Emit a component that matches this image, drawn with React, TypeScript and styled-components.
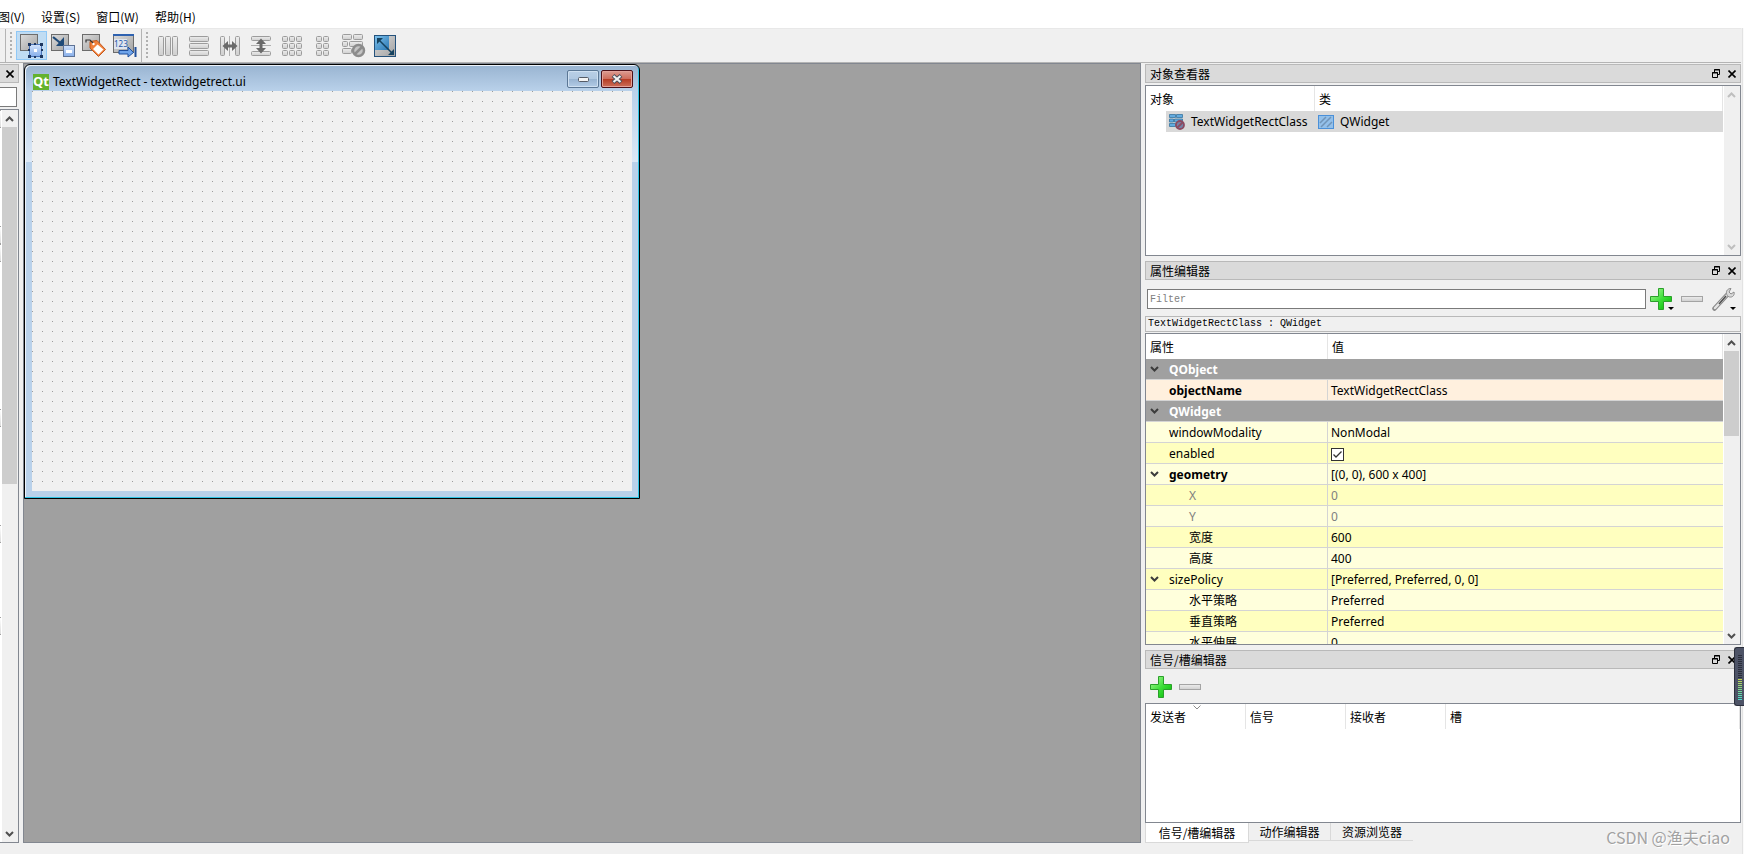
import React from 'react';
import styled, { createGlobalStyle, css } from 'styled-components';

const ui = `"Noto Sans", "Noto Sans CJK SC", sans-serif`;
const cjk = `"Noto Sans CJK SC", sans-serif`;

const GlobalStyle = createGlobalStyle`
  * { box-sizing: border-box; }
  body { margin: 0; font: 12px/18px ${ui}; color: #000; background: #f0f0f0; overflow: hidden; }
  button, input { font: inherit; color: inherit; margin: 0; padding: 0; border-radius: 0; }
  button { background: none; border: 0; display: flex; align-items: center; justify-content: center; }
  table { border-collapse: separate; border-spacing: 0; table-layout: fixed; width: 100%; }
  th, td { padding: 0; font-weight: normal; text-align: left; white-space: nowrap; }
  svg { display: block; flex: none; }
`;

const Page = styled.div`
  position: relative;
  display: flex;
  flex-direction: column;
  height: 100vh;
  background: #fafafa;
`;

const MenuBar = styled.nav`
  display: flex;
  align-items: center;
  height: 28px;
  padding-top: 6px;
  background: #fff;
  overflow: hidden;
`;

const MenuItem = styled.button<{ $cut?: boolean }>`
  padding: 0 8px;
  font-family: ${cjk};
  white-space: nowrap;
  ${p => p.$cut && css`width: 33px; justify-content: flex-end;`}
`;

const Body = styled.div`
  flex: 1;
  min-height: 0;
  display: flex;
  flex-direction: column;
  margin-right: 1px;
  padding-right: 1px;
  border-right: 1px solid #e3e3e3;
  background: #f0f0f0;
`;

const ToolBars = styled.div`
  display: flex;
  flex: none;
  height: 35px;
  border-top: 1px solid #e8e8e8;
  border-bottom: 1px solid #b4b4b4;
  padding-left: 5px;
`;

const ToolGroup = styled.div`
  display: flex;
  align-items: center;
  border-left: 1px solid #b4b4b4;
  padding: 0 1px 0 4px;
`;

const Grip = styled.span`
  width: 2px;
  height: 27px;
  margin-right: 4px;
  background: linear-gradient(#b0b0b0 2px, transparent 2px) 0 0 / 2px 4px;
`;

const ToolButton = styled.button<{ $active?: boolean }>`
  width: 31px;
  height: 29px;
  border: 1px solid ${p => (p.$active ? '#90c8f6' : 'transparent')};
  background: ${p => (p.$active ? '#c0dcf3' : 'transparent')};
`;

const Workspace = styled.div`
  flex: 1;
  min-height: 0;
  display: flex;
  gap: 4px;
  padding-bottom: 11px;
`;

const LeftDock = styled.aside`
  flex: 0 0 19px;
  display: flex;
  flex-direction: column;
  padding-top: 1px;
`;

const LeftTitle = styled.div`
  display: flex;
  justify-content: flex-end;
  align-items: center;
  height: 19px;
  padding-right: 4px;
  border: 1px solid #b9b9b9;
  border-left: 0;
  background: #dadada;
`;

const LeftFilter = styled.input`
  width: 17px;
  height: 20px;
  margin: 4px 0 2px;
  border: 1px solid #7a7a7a;
  border-left: 0;
  background: #fff;
`;

const LeftList = styled.div`
  flex: 1;
  min-height: 0;
  display: flex;
  border: 1px solid #828790;
  border-left: 0;
  background: #fff;
`;

const CategoryEdges = styled.div`
  width: 2px;
  padding-right: 1px;
`;

const CategoryEdge = styled.div<{ $gap: number }>`
  height: 18px;
  margin-top: ${p => p.$gap}px;
  border: solid #a0a0a0;
  border-width: 1px 0;
  background: linear-gradient(#fff, #dcdcdc);
`;

const Bar = styled.div<{ $w: number }>`
  flex: 0 0 ${p => p.$w}px;
  display: flex;
  flex-direction: column;
  background: #f0f0f0;
`;

const BarArrow = styled.button`
  flex: none;
  height: 17px;
  padding-right: 1px;
`;

const Thumb = styled.div<{ $h: number }>`
  height: ${p => p.$h}px;
  margin-right: 1px;
  background: #cdcdcd;
`;

const Spacer = styled.div`
  flex: 1;
`;

const Canvas = styled.main`
  flex: 1;
  min-width: 0;
  border: 1px solid #828790;
  background: #a0a0a0;
  overflow: hidden;
`;

const FormWindow = styled.section`
  width: 616px;
  padding: 0 7px 7px;
  border: 1px solid #000;
  border-radius: 6px 6px 0 0;
  box-shadow: inset -1px -1px #2fc4e4, inset 1px 1px #eef4fb;
  background:
    linear-gradient(#99b4d1, #b9d1ea) 0 0 / 100% 26px no-repeat,
    linear-gradient(#b9d1ea, #dce8f6) 0 26px / 100% 71px no-repeat,
    #b9d1ea;
`;

const FormTitle = styled.header`
  display: flex;
  align-items: flex-end;
  height: 26px;
  padding: 0 0 1px 1px;
  line-height: 16px;
`;

const QtLogo = styled.span`
  width: 16px;
  height: 16px;
  margin-right: 4px;
  background: #64b22e;
  color: #fff;
  font: bold 13px/15px "Open Sans", sans-serif;
  text-align: center;
`;

const WindowButtons = styled.div`
  display: flex;
  gap: 2px;
  margin: 0 -1px 2px auto;
`;

const WindowButton = styled.button<{ $close?: boolean }>`
  width: 32px;
  height: 18px;
  border: 1px solid ${p => (p.$close ? '#4c1018' : '#5b7795')};
  border-radius: 2px;
  box-shadow: inset 0 0 0 1px ${p => (p.$close ? '#e3a199' : '#cfe0f1')};
  background: ${p =>
    p.$close
      ? 'linear-gradient(#dc9c92, #cf6d5c 48%, #b53a22 50%, #cc6f5a)'
      : 'linear-gradient(#b9cfe6, #b0c8e1 48%, #97b3d1 50%, #b3cce6)'};
`;

const DotGrid = styled.div`
  height: 400px;
  background:
    linear-gradient(transparent 1px, #f0f0f0 1px) 0 0 / 10px 10px,
    linear-gradient(90deg, #9c9c9c 1px, #f0f0f0 1px) 0 0 / 10px 10px;
`;

const RightDock = styled.aside`
  flex: 0 0 596px;
  min-width: 0;
  display: flex;
  flex-direction: column;
  padding-top: 1px;
`;

const DockTitle = styled.header`
  flex: none;
  display: flex;
  align-items: center;
  gap: 8px;
  height: 19px;
  padding: 0 4px;
  border: 1px solid #b9b9b9;
  background: #dadada;
  font-family: ${cjk};
`;

const DockName = styled.span`
  flex: 1;
`;

const Frame = styled.div<{ $h?: number }>`
  ${p => (p.$h ? css`flex: none; height: ${p.$h}px;` : css`flex: 1; min-height: 0;`)}
  display: flex;
  align-items: stretch;
  border: 1px solid #828790;
  background: #fff;
`;

const ObjectFrame = styled(Frame)`
  margin: 2px 0 5px;
`;

const Clip = styled.div<{ $full?: boolean }>`
  flex: 1;
  min-width: 0;
  overflow: hidden;
  border-right: ${p => (p.$full ? 0 : 1)}px solid #fff;
`;

const HeadCell = styled.th<{ $w?: number }>`
  height: 25px;
  padding-left: 4px;
  ${p => p.$w && css`width: ${p.$w}px;`}
  border-right: 1px solid #e5e5e5;
  font-family: ${cjk};
`;

const TreeCell = styled.td`
  height: 21px;
`;

const TreeItem = styled.div<{ $indent?: boolean }>`
  display: flex;
  align-items: center;
  gap: 6px;
  height: 21px;
  margin-left: ${p => (p.$indent ? 20 : 0)}px;
  padding-left: 3px;
  background: #d9d9d9;
`;

const FilterRow = styled.div`
  flex: none;
  display: flex;
  align-items: center;
  height: 36px;
  padding: 2px 3px 0 2px;
`;

const FilterInput = styled.input`
  flex: 1;
  min-width: 0;
  height: 20px;
  margin-right: 4px;
  padding-left: 2px;
  border: 1px solid #7a7a7a;
  background: #fff;
  font: 10px/18px "Liberation Mono", monospace;
  &::placeholder { color: #808080; opacity: 1; }
`;

const IconButton = styled.button<{ $w: number }>`
  width: ${p => p.$w}px;
  height: 24px;
`;

const ClassLabel = styled.div`
  flex: none;
  height: 16px;
  margin-bottom: 1px;
  padding-left: 2px;
  border: 1px solid #b9b9b9;
  font: 10px/14px "Liberation Mono", monospace;
`;

type Tone = 'group' | 'peach' | 'light' | 'dark';
const toneColor: Record<Tone, string> = {
  group: '#a0a0a0',
  peach: '#fff0de',
  light: '#ffffdc',
  dark: '#ffffbf',
};

const PropRow = styled.tr<{ $tone: Tone; $muted?: boolean }>`
  background: ${p => toneColor[p.$tone]};
  color: ${p => (p.$tone === 'group' ? '#fff' : p.$muted ? '#808080' : '#000')};
`;

const PropCell = styled.td<{ $bold?: boolean; $name?: boolean }>`
  height: 21px;
  padding: 2px 0 0 3px;
  border-bottom: 1px solid #d4d4d4;
  ${p => p.$name && css`border-right: 1px solid #d4d4d4;`}
  ${p => p.$bold && css`font-weight: bold;`}
`;

const PropLabel = styled.div<{ $depth: number }>`
  display: flex;
  align-items: center;
  height: 18px;
  padding-left: ${p => (p.$depth === 2 ? 20 : 0)}px;
`;

const Expander = styled.span`
  width: 20px;
  padding: 0 0 2px 1px;
`;

const CheckLabel = styled.label`
  display: flex;
  align-items: center;
  height: 18px;
`;

const CheckBox = styled.input`
  appearance: none;
  width: 13px;
  height: 13px;
  border: 1px solid #333;
  background: #fff;
  & + svg { visibility: hidden; }
  &:checked + svg { visibility: visible; }
`;

const CheckWrap = styled.span`
  display: grid;
  & > * { grid-area: 1 / 1; }
  & > svg { pointer-events: none; }
`;

const SignalTitle = styled(DockTitle)`
  margin-top: 5px;
`;

const SignalTools = styled.div`
  flex: none;
  display: flex;
  align-items: center;
  gap: 5px;
  height: 34px;
  padding: 2px 0 0 5px;
`;

const SortInner = styled.div`
  position: relative;
`;

const SortMark = styled.span`
  position: absolute;
  left: 43px;
  top: -3px;
`;

const Tabs = styled.div`
  flex: none;
  display: flex;
  align-items: flex-start;
  height: 20px;
`;

const Tab = styled.button<{ $active?: boolean }>`
  height: ${p => (p.$active ? 20 : 18)}px;
  width: ${p => (p.$active ? 104 : 82)}px;
  border: 1px solid #d9d9d9;
  border-top: 0;
  border-left-width: ${p => (p.$active ? 1 : 0)}px;
  background: ${p => (p.$active ? '#fff' : '#f0f0f0')};
  font-family: ${cjk};
  white-space: nowrap;
  &:last-child { border-right: 0; }
`;

const Monitor = styled.div`
  position: absolute;
  right: 0;
  top: 647px;
  width: 10px;
  height: 59px;
  padding: 7px 2px 6px 3px;
  border: 1px solid #2b2f3c;
  border-right: 0;
  border-radius: 3px 0 0 3px;
  background: #4d5366;
`;

const MonitorTrack = styled.div`
  width: 4px;
  height: 45px;
  background:
    repeating-linear-gradient(transparent 0 1px, #4d5366 1px 2px),
    linear-gradient(#2b2f3c 24px, #c6d84e 24px, #7fd98a 34px, #45e0d0);
`;

const Watermark = styled.div`
  position: absolute;
  right: 14px;
  bottom: 6px;
  color: #a2a2a2;
  font: 16px/22px "Noto Sans CJK SC", sans-serif;
  text-shadow: 1px 1px #fff;
`;

/* ---------- icons ---------- */

const Chevron = ({ up, color = '#505050' }: { up?: boolean; color?: string }) => (
  <svg width="9" height="6" viewBox="0 0 9 6">
    <path d={up ? 'M1 5 4.5 1.5 8 5' : 'M1 1 4.5 4.5 8 1'} fill="none" stroke={color} strokeWidth="2" />
  </svg>
);

const CloseIcon = () => (
  <svg width="8" height="8" viewBox="0 0 8 8">
    <path d="M.5.5 7.5 7.5M7.5.5.5 7.5" stroke="#000" strokeWidth="1.6" />
  </svg>
);

const FloatIcon = () => (
  <svg width="8" height="9" viewBox="0 0 8 9" fill="none" stroke="#000">
    <path d="M2.5 3V.5h5v5H6M2 1h6" />
    <path d="M.5 3.5h5v5h-5zM0 4h6" />
  </svg>
);

const HiddenSvg = styled.svg`
  position: absolute;
`;

const Defs = () => (
  <HiddenSvg width="0" height="0" aria-hidden="true">
    <defs>
      <linearGradient id="steel" x1="0" y1="0" x2="1" y2="1">
        <stop offset="0" stopColor="#dcdcdc" />
        <stop offset="1" stopColor="#a2a2a2" />
      </linearGradient>
      <linearGradient id="blue" x1="0" y1="0" x2="0" y2="1">
        <stop offset="0" stopColor="#d3e3fb" />
        <stop offset="1" stopColor="#86aeea" />
      </linearGradient>
      <linearGradient id="pale" x1="0" y1="0" x2="0" y2="1">
        <stop offset="0" stopColor="#ededed" />
        <stop offset="1" stopColor="#cfcfcf" />
      </linearGradient>
      <linearGradient id="green" x1="0" y1="0" x2="1" y2="1">
        <stop offset="0" stopColor="#b4f7a0" />
        <stop offset=".5" stopColor="#3fe03a" />
        <stop offset="1" stopColor="#00b400" />
      </linearGradient>
      <linearGradient id="teal" x1="0" y1="0" x2="1" y2="1">
        <stop offset="0" stopColor="#7cc0ec" />
        <stop offset="1" stopColor="#2b79b4" />
      </linearGradient>
    </defs>
  </HiddenSvg>
);

const Ico = ({ children }: { children: React.ReactNode }) => (
  <svg width="24" height="24" viewBox="0 0 24 24">{children}</svg>
);

const Plate = () => <rect x=".5" y=".5" width="17" height="16" fill="url(#steel)" stroke="#6c6c6c" />;

const WidgetsIcon = () => (
  <Ico>
    <Plate />
    <rect x="9.5" y="10.5" width="12" height="12" fill="url(#blue)" stroke="#4a74b8" />
    <rect x="14" y="15" width="3" height="3" fill="#fff" />
    {[[8, 9], [20, 9], [8, 21], [20, 21]].map(([x, y]) => (
      <rect key={`${x}-${y}`} x={x} y={y} width="3" height="3" fill="#1d355e" />
    ))}
    {[[14, 9], [8, 15], [21, 15], [14, 22]].map(([x, y]) => (
      <rect key={`${x}-${y}`} x={x} y={y} width="2" height="2" fill="#1d355e" />
    ))}
  </Ico>
);

const SignalsIcon = () => (
  <Ico>
    <Plate />
    <path d="M2 3 10 9.500" stroke="#1f4a78" strokeWidth="2.2" />
    <path d="M13 3v9H5z" fill="#1f4a78" />
    <rect x="12.5" y="11.5" width="11" height="11" fill="url(#blue)" stroke="#5d7296" />
    <rect x="15" y="16" width="6" height="3" fill="#fff" />
  </Ico>
);

const BuddiesIcon = () => (
  <Ico>
    <Plate />
    <path d="M8 7.5 15 6.5 23.5 15.5 16.5 22.5 8 14z" fill="#f0803c" stroke="#c2591d" />
    <path d="M15.500 10.500 21.500 15.500 16.500 20.500 11 15z" fill="#fff" />
    <path d="M4 8.500V6h4l3.500 3.500" fill="none" stroke="#333" strokeWidth="1.2" />
    <circle cx="11.5" cy="10" r="1.2" fill="#fff" />
  </Ico>
);

const TabOrderIcon = () => (
  <Ico>
    <rect x=".5" y=".5" width="20" height="18" fill="url(#steel)" stroke="#6c6c6c" />
    <rect x="1" y="5" width="13" height="10" fill="#dfe6f0" />
    <path d="M0 1h21" stroke="#2f62b0" strokeWidth="2" />
    <text x="1" y="13" fontSize="8" fontFamily="Noto Sans, sans-serif" fill="#1f57a8">123</text>
    <path d="M6 16.500h9v-3.500l5.500 5.500-5.500 4.500v-3H6z" fill="#6fa4ea" stroke="#1f4f9c" />
    <path d="M22.500 13v10" stroke="#1f4f9c" strokeWidth="2" />
  </Ico>
);

const Bricks = ({ items }: { items: number[][] }) => (
  <>
    {items.map(([x, y, w, h], i) => (
      <rect key={i} x={x + 0.5} y={y + 0.5} width={w - 1} height={h - 1} rx="1" fill="url(#pale)" stroke="#9c9c9c" />
    ))}
  </>
);

const ColumnsIcon = () => <Ico><Bricks items={[[2, 2, 6, 20], [9, 2, 6, 20], [16, 2, 6, 20]]} /></Ico>;
const RowsIcon = () => <Ico><Bricks items={[[2, 2, 20, 6], [2, 9, 20, 6], [2, 16, 20, 6]]} /></Ico>;
const SplitHIcon = () => (
  <Ico>
    <Bricks items={[[2, 2, 5, 20], [17, 2, 5, 20]]} />
    <path d="M11.500 2v20" stroke="#b0b0b0" />
    <path d="M4.500 12 10 7v3.500h4V7l5.500 5-5.500 5v-3.500h-4V17z" fill="#6a6a6a" />
  </Ico>
);
const SplitVIcon = () => (
  <Ico>
    <Bricks items={[[2, 2, 20, 5], [2, 17, 20, 5]]} />
    <path d="M2 11.500h20" stroke="#b0b0b0" />
    <path d="M12 4.500 7 10h3.500v4H7l5 5.500 5-5.500h-3.500v-4H17z" fill="#6a6a6a" />
  </Ico>
);
const cells = (xs: number[]) => xs.flatMap(x => [2, 9, 16].map(y => [x, y, 6, 6]));
const GridIcon = () => <Ico><Bricks items={cells([2, 9, 16])} /></Ico>;
const FormIcon = () => <Ico><Bricks items={cells([5, 12])} /></Ico>;
const BreakIcon = () => (
  <Ico>
    <Bricks items={[[0, 0, 10, 6], [11, 0, 10, 6], [0, 7, 6, 6], [7, 7, 14, 6], [0, 14, 10, 6]]} />
    <circle cx="16.5" cy="16.5" r="5.5" fill="#c4c4c4" stroke="#8c8c8c" strokeWidth="2.5" />
    <path d="M12.500 20.500 20.500 12.500" stroke="#8c8c8c" strokeWidth="2.500" />
  </Ico>
);
const AdjustIcon = () => (
  <Ico>
    <rect x="1.500" y="1.500" width="21" height="21" fill="url(#steel)" stroke="#24527c" />
    <rect x="2" y="2" width="14" height="14" fill="url(#teal)" />
    <path d="M6 6 19 19" stroke="#15425f" strokeWidth="1.500" />
    <path d="M4 4h6l-6 6zM21 21h-6l6-6z" fill="#15425f" />
  </Ico>
);

const PlusIcon = ({ menu }: { menu?: boolean }) => (
  <svg width="24" height="22" viewBox="0 0 24 22">
    <path d="M8.500 .500h5v8h8v5h-8v8h-5v-8h-8v-5h8z" fill="url(#green)" stroke="#2aa02a" />
    {menu && <path d="M18 19h6l-3 3z" fill="#000" />}
  </svg>
);
const MinusIcon = () => (
  <svg width="22" height="6" viewBox="0 0 22 6">
    <rect x=".5" y=".5" width="21" height="5" fill="url(#pale)" stroke="#a4a4a4" />
  </svg>
);
const WrenchIcon = () => (
  <svg width="24" height="24" viewBox="0 0 24 24">
    <path d="M2.500 21.500 15 8" stroke="#888" strokeWidth="4.500" strokeLinecap="round" />
    <path d="M3 21 15 8" stroke="#e4e4e4" strokeWidth="2.500" strokeLinecap="round" />
    <path d="M7 17 14 9" stroke="#4e4e4e" strokeWidth="1.500" />
    <path d="M19 1.500c-3 0-5 2-4.500 5 .5 3 3.500 4.500 6 3 1.500-1 2-2.500 1.500-4.500l-3 2-2-2z" fill="#d8d8d8" stroke="#8c8c8c" />
    <path d="M18 20h6l-3 3z" fill="#000" />
  </svg>
);
const ClassIcon = () => (
  <svg width="16" height="16" viewBox="0 0 16 16">
    <g fill="#62abe0" stroke="#36749f" strokeWidth=".8">
      <path d="M.5.500h6v3h-6zM7.500.500h6v3h-6zM.5 5h4v3h-4zM5.500 5h8v3h-8zM.5 9.500h6v3h-6z" />
    </g>
    <circle cx="11" cy="11" r="4" fill="#7583a8" stroke="#8c4a62" strokeWidth="1.800" />
    <path d="M8 14 14 8" stroke="#8c4a62" strokeWidth="1.800" />
  </svg>
);
const QWidgetIcon = () => (
  <svg width="16" height="14" viewBox="0 0 16 14">
    <rect x=".5" y=".5" width="15" height="13" fill="#93c0ea" stroke="#4a90d9" />
    <path d="M2 8 8 2M3 12 13 2M9 12l5-5" stroke="#7094b8" strokeWidth="1.500" />
  </svg>
);

/* ---------- parts ---------- */

const ScrollBar = ({ w, thumb, disabled }: { w: number; thumb?: number; disabled?: boolean }) => (
  <Bar $w={w}>
    <BarArrow aria-label="Scroll up"><Chevron up color={disabled ? '#bfbfbf' : undefined} /></BarArrow>
    {thumb && <Thumb $h={thumb} />}
    <Spacer />
    <BarArrow aria-label="Scroll down"><Chevron color={disabled ? '#bfbfbf' : undefined} /></BarArrow>
  </Bar>
);

const DockButtons = () => (
  <>
    <button aria-label="Float"><FloatIcon /></button>
    <button aria-label="Close"><CloseIcon /></button>
  </>
);

interface Prop {
  name: string;
  value?: string;
  tone: Tone;
  depth?: number;
  bold?: boolean;
  muted?: boolean;
  open?: boolean;
  check?: boolean;
}

const props: Prop[] = [
  { name: 'QObject', tone: 'group', bold: true, open: true },
  { name: 'objectName', value: 'TextWidgetRectClass', tone: 'peach', bold: true },
  { name: 'QWidget', tone: 'group', bold: true, open: true },
  { name: 'windowModality', value: 'NonModal', tone: 'light' },
  { name: 'enabled', tone: 'dark', check: true },
  { name: 'geometry', value: '[(0, 0), 600 x 400]', tone: 'light', bold: true, open: true },
  { name: 'X', value: '0', tone: 'dark', depth: 2, muted: true },
  { name: 'Y', value: '0', tone: 'light', depth: 2, muted: true },
  { name: '宽度', value: '600', tone: 'dark', depth: 2 },
  { name: '高度', value: '400', tone: 'light', depth: 2 },
  { name: 'sizePolicy', value: '[Preferred, Preferred, 0, 0]', tone: 'dark', open: true },
  { name: '水平策略', value: 'Preferred', tone: 'light', depth: 2 },
  { name: '垂直策略', value: 'Preferred', tone: 'dark', depth: 2 },
  { name: '水平伸展', value: '0', tone: 'light', depth: 2 },
];

const PropertyRow = ({ p }: { p: Prop }) => {
  const label = (
    <PropLabel $depth={p.depth ?? 1}>
      <Expander>{p.open && <Chevron color="#3c3c3c" />}</Expander>
      {p.name}
    </PropLabel>
  );
  if (p.tone === 'group') {
    return <PropRow $tone="group"><PropCell $bold colSpan={2}>{label}</PropCell></PropRow>;
  }
  return (
    <PropRow $tone={p.tone} $muted={p.muted}>
      <PropCell $name $bold={p.bold}>{label}</PropCell>
      <PropCell>
        {p.check ? (
          <CheckLabel>
            <CheckWrap>
              <CheckBox type="checkbox" defaultChecked aria-label={p.name} />
              <svg width="13" height="13" viewBox="0 0 13 13">
                <path d="M2.500 6.500 5 9 10.500 3.500" fill="none" stroke="#333" strokeWidth="1.300" />
              </svg>
            </CheckWrap>
          </CheckLabel>
        ) : p.value}
      </PropCell>
    </PropRow>
  );
};

const editTools: [string, React.FC][] = [
  ['Edit widgets', WidgetsIcon],
  ['Edit signals', SignalsIcon],
  ['Edit buddies', BuddiesIcon],
  ['Edit tab order', TabOrderIcon],
];

const layoutTools: [string, React.FC][] = [
  ['Horizontal layout', ColumnsIcon],
  ['Vertical layout', RowsIcon],
  ['Horizontal splitter', SplitHIcon],
  ['Vertical splitter', SplitVIcon],
  ['Grid layout', GridIcon],
  ['Form layout', FormIcon],
  ['Break layout', BreakIcon],
  ['Adjust size', AdjustIcon],
];

export default function App() {
  return (
    <Page>
      <GlobalStyle />
      <Defs />
      <MenuBar>
        <MenuItem $cut>图(V)</MenuItem>
        <MenuItem>设置(S)</MenuItem>
        <MenuItem>窗口(W)</MenuItem>
        <MenuItem>帮助(H)</MenuItem>
      </MenuBar>
      <Body>
        <ToolBars>
          <ToolGroup>
            <Grip />
            {editTools.map(([name, Icon], i) => (
              <ToolButton key={name} aria-label={name} $active={i === 0}><Icon /></ToolButton>
            ))}
          </ToolGroup>
          <ToolGroup>
            <Grip />
            {layoutTools.map(([name, Icon]) => (
              <ToolButton key={name} aria-label={name}><Icon /></ToolButton>
            ))}
          </ToolGroup>
        </ToolBars>
        <Workspace>
          <LeftDock>
            <LeftTitle><button aria-label="Close"><CloseIcon /></button></LeftTitle>
            <LeftFilter aria-label="Filter widgets" />
            <LeftList>
              <CategoryEdges>
                {[0, 98, 0, 147, 98, 74].map((gap, i) => <CategoryEdge key={i} $gap={gap} />)}
              </CategoryEdges>
              <ScrollBar w={16} thumb={357} />
            </LeftList>
          </LeftDock>
          <Canvas>
            <FormWindow>
              <FormTitle>
                <QtLogo>Qt</QtLogo>
                TextWidgetRect - textwidgetrect.ui
                <WindowButtons>
                  <WindowButton aria-label="Minimize">
                    <svg width="11" height="5" viewBox="0 0 11 5">
                      <rect x=".5" y=".5" width="10" height="4" rx="1" fill="#f4f4f4" stroke="#555b66" />
                    </svg>
                  </WindowButton>
                  <WindowButton $close aria-label="Close form">
                    <svg width="12" height="10" viewBox="0 0 12 10">
                      <path d="M2 1.500 10 8.500M10 1.500 2 8.500" stroke="#4a4f5c" strokeWidth="4" />
                      <path d="M2.500 2 9.500 8M9.500 2 2.500 8" stroke="#f2f2f2" strokeWidth="2.200" />
                    </svg>
                  </WindowButton>
                </WindowButtons>
              </FormTitle>
              <DotGrid />
            </FormWindow>
          </Canvas>
          <RightDock>
            <DockTitle><DockName>对象查看器</DockName><DockButtons /></DockTitle>
            <ObjectFrame $h={171}>
              <Clip>
                <table>
                  <thead>
                    <tr><HeadCell $w={169}>对象</HeadCell><HeadCell>类</HeadCell></tr>
                  </thead>
                  <tbody>
                    <tr>
                      <TreeCell><TreeItem $indent><ClassIcon />TextWidgetRectClass</TreeItem></TreeCell>
                      <TreeCell><TreeItem><QWidgetIcon />QWidget</TreeItem></TreeCell>
                    </tr>
                  </tbody>
                </table>
              </Clip>
              <ScrollBar w={16} disabled />
            </ObjectFrame>

            <DockTitle><DockName>属性编辑器</DockName><DockButtons /></DockTitle>
            <FilterRow>
              <FilterInput placeholder="Filter" aria-label="Filter" />
              <IconButton $w={24} aria-label="Add property"><PlusIcon menu /></IconButton>
              <IconButton $w={36} aria-label="Remove property"><MinusIcon /></IconButton>
              <IconButton $w={28} aria-label="Configure"><WrenchIcon /></IconButton>
            </FilterRow>
            <ClassLabel>TextWidgetRectClass : QWidget</ClassLabel>
            <Frame>
              <Clip>
                <table>
                  <thead>
                    <tr><HeadCell $w={182}>属性</HeadCell><HeadCell>值</HeadCell></tr>
                  </thead>
                  <tbody>{props.map(p => <PropertyRow key={p.name} p={p} />)}</tbody>
                </table>
              </Clip>
              <ScrollBar w={16} thumb={85} />
            </Frame>

            <SignalTitle><DockName>信号/槽编辑器</DockName><DockButtons /></SignalTitle>
            <SignalTools>
              <IconButton $w={24} aria-label="Add connection"><PlusIcon /></IconButton>
              <IconButton $w={22} aria-label="Remove connection"><MinusIcon /></IconButton>
            </SignalTools>
            <Frame $h={120}>
              <Clip $full>
                <table>
                  <thead>
                    <tr>
                      <HeadCell $w={100}>
                        <SortInner>
                          发送者
                          <SortMark>
                            <svg width="8" height="5" viewBox="0 0 8 5">
                              <path d="M.5.5 4 4 7.500.5" fill="none" stroke="#8c8c8c" />
                            </svg>
                          </SortMark>
                        </SortInner>
                      </HeadCell>
                      <HeadCell $w={100}>信号</HeadCell>
                      <HeadCell $w={100}>接收者</HeadCell>
                      <HeadCell>槽</HeadCell>
                    </tr>
                  </thead>
                </table>
              </Clip>
            </Frame>
            <Tabs role="tablist">
              <Tab $active role="tab">信号/槽编辑器</Tab>
              <Tab role="tab">动作编辑器</Tab>
              <Tab role="tab">资源浏览器</Tab>
            </Tabs>
          </RightDock>
        </Workspace>
      </Body>
      <Monitor><MonitorTrack /></Monitor>
      <Watermark>CSDN @渔夫ciao</Watermark>
    </Page>
  );
}
